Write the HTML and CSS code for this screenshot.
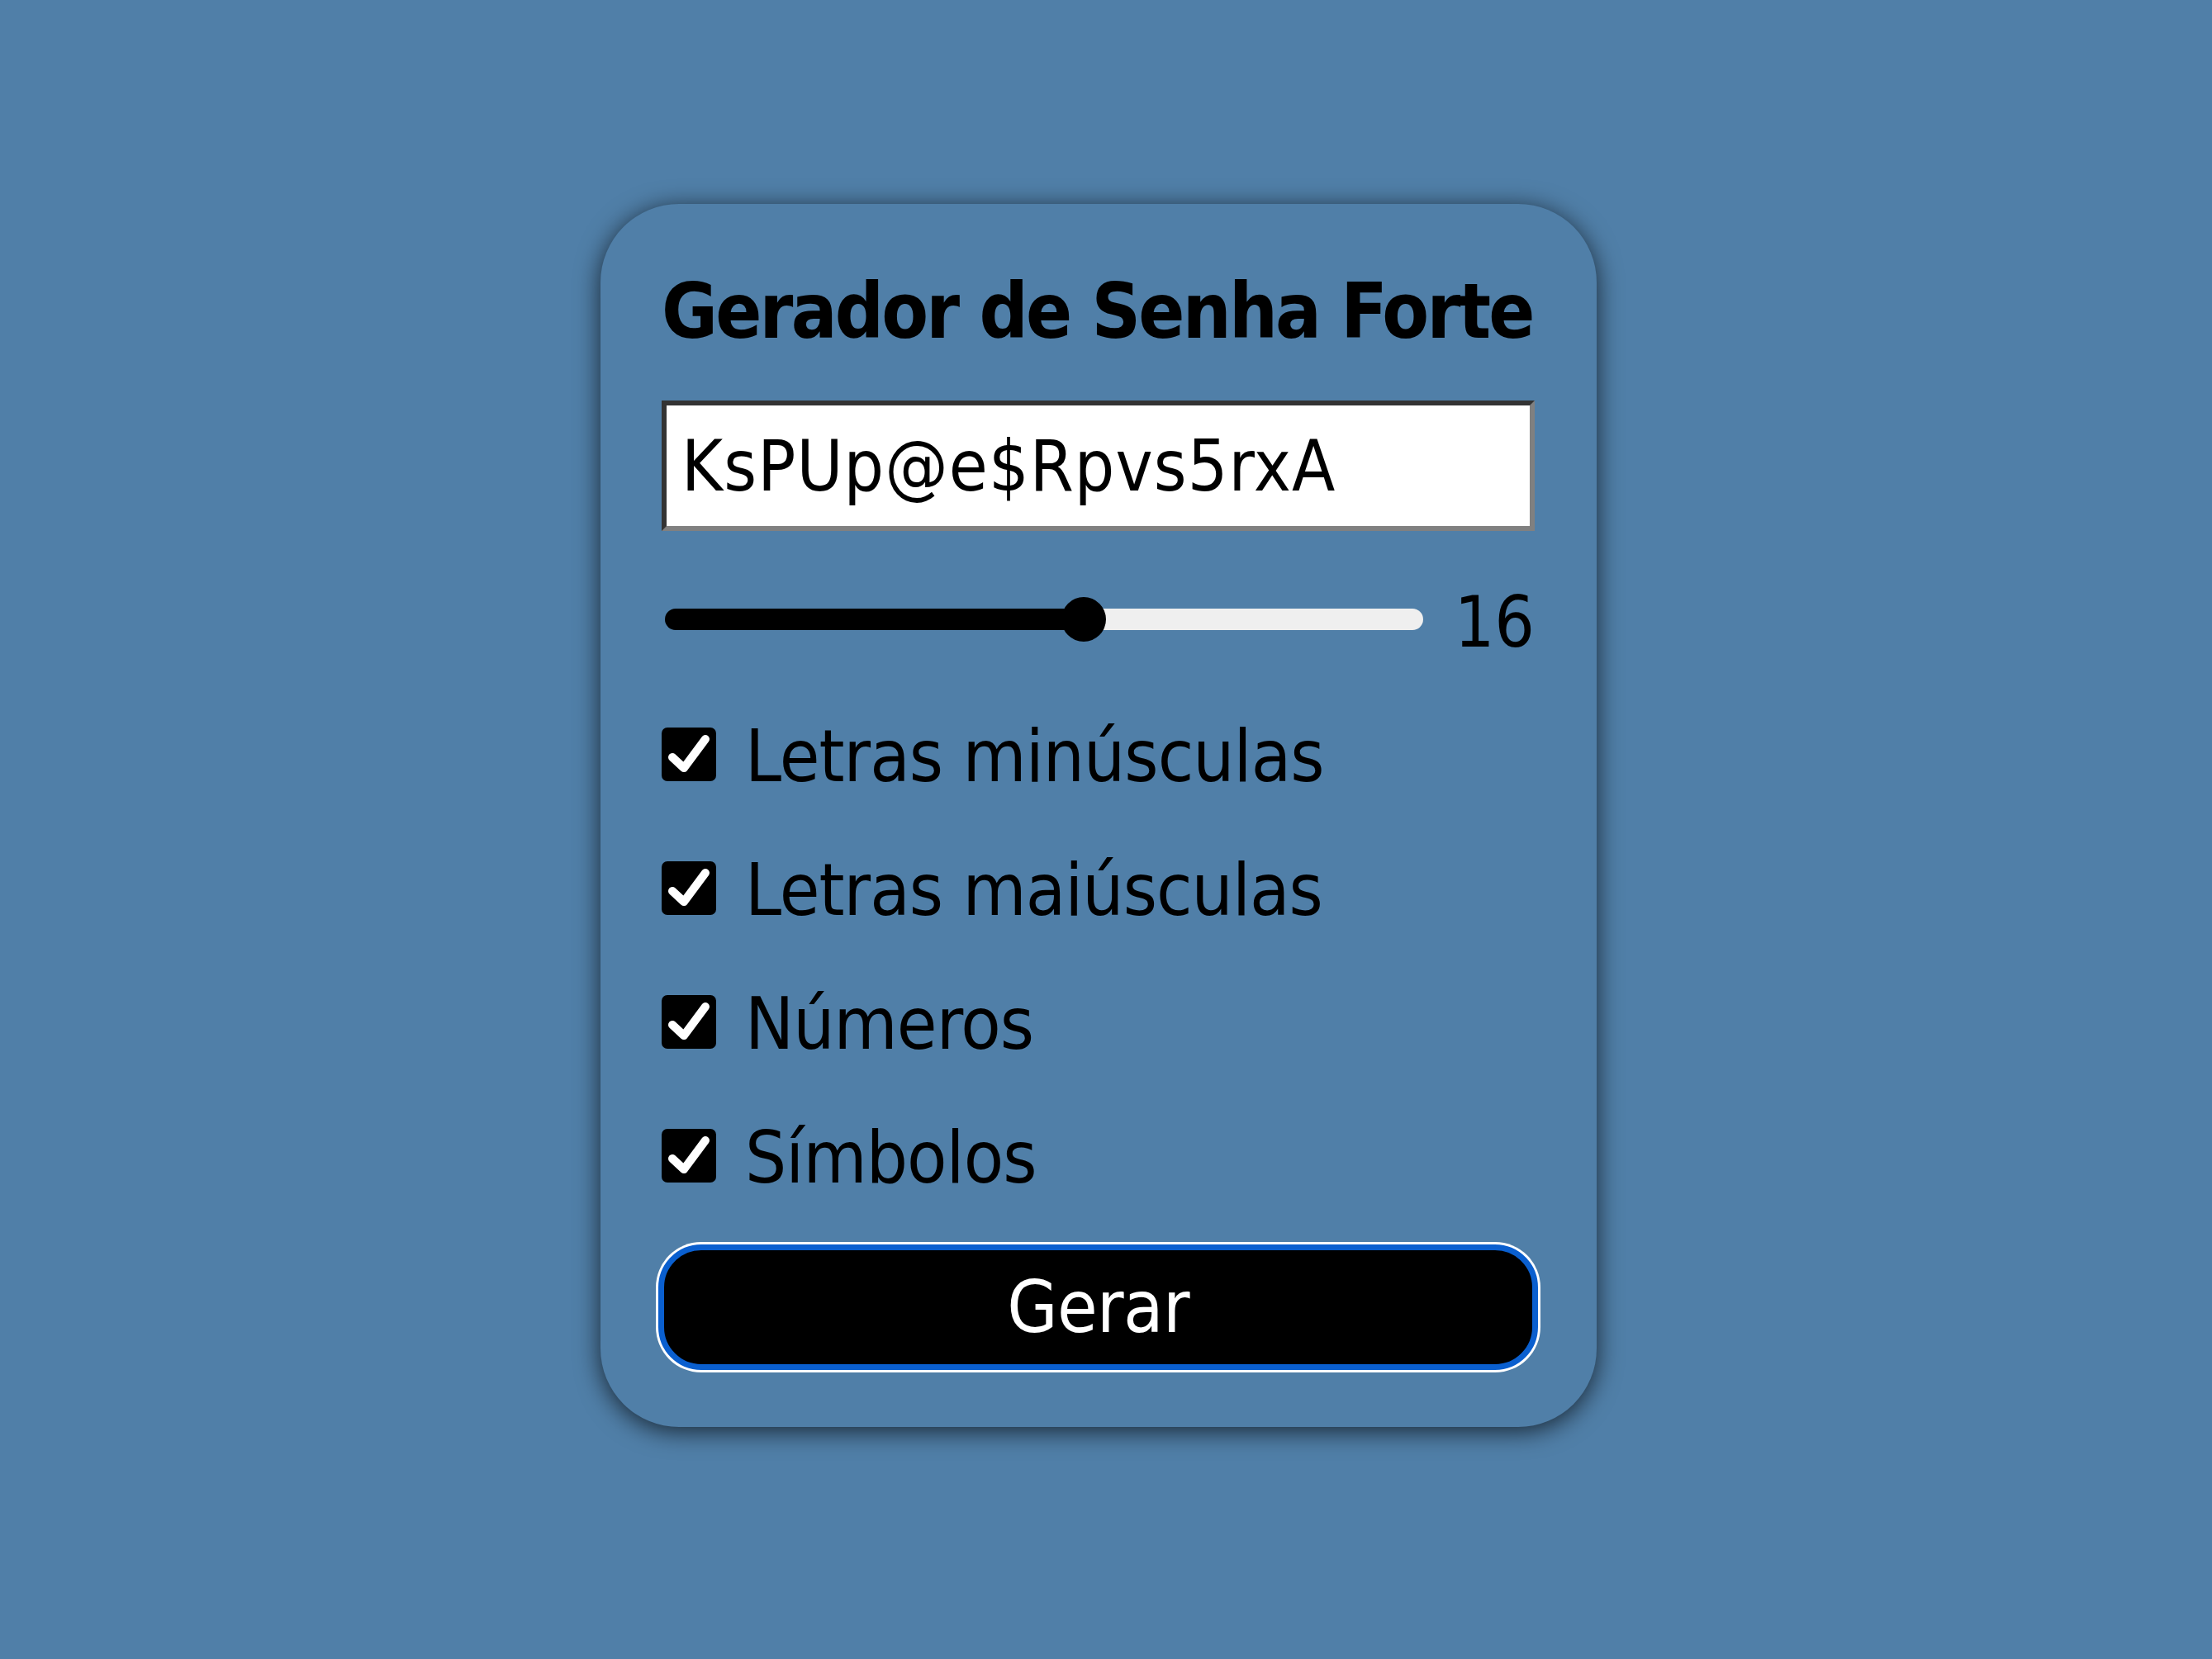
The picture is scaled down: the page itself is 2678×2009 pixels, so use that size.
FILE: index.html
```html
<!DOCTYPE html>
<html lang="pt-BR">
<head>
<meta charset="utf-8">
<title>Gerador de Senha Forte</title>
<link rel="stylesheet" href="styles.css">
</head>
<body>
  <main class="card">
    <h1 class="title">Gerador de Senha Forte</h1>
    <input class="password" type="text" value="KsPUp@e$Rpvs5rxA" readonly>
    <div class="length-row">
      <input class="range" type="range" min="6" max="24" value="16">
      <span class="length-value">16</span>
    </div>
    <div class="options">
      <label class="option">
        <span class="box"><svg viewBox="0 0 66 65" width="66" height="65"><polyline points="13,36 27,49 53,14" fill="none" stroke="#fff" stroke-width="10" stroke-linecap="round" stroke-linejoin="round"/></svg></span>
        <span class="option-text">Letras minúsculas</span>
      </label>
      <label class="option">
        <span class="box"><svg viewBox="0 0 66 65" width="66" height="65"><polyline points="13,36 27,49 53,14" fill="none" stroke="#fff" stroke-width="10" stroke-linecap="round" stroke-linejoin="round"/></svg></span>
        <span class="option-text">Letras maiúsculas</span>
      </label>
      <label class="option">
        <span class="box"><svg viewBox="0 0 66 65" width="66" height="65"><polyline points="13,36 27,49 53,14" fill="none" stroke="#fff" stroke-width="10" stroke-linecap="round" stroke-linejoin="round"/></svg></span>
        <span class="option-text">Números</span>
      </label>
      <label class="option">
        <span class="box"><svg viewBox="0 0 66 65" width="66" height="65"><polyline points="13,36 27,49 53,14" fill="none" stroke="#fff" stroke-width="10" stroke-linecap="round" stroke-linejoin="round"/></svg></span>
        <span class="option-text">Símbolos</span>
      </label>
    </div>
    <button class="generate" type="button">Gerar</button>
  </main>
</body>
</html>
```

FILE: styles.css
```css
* {
  box-sizing: border-box;
}

html, body {
  margin: 0;
  height: 100%;
}

body {
  background: #507fa8;
  display: flex;
  align-items: center;
  justify-content: center;
  padding: 0 18px 34px 0;
  font-family: "DejaVu Sans Condensed", "DejaVu Sans", sans-serif;
  font-stretch: condensed;
  color: #000;
}

.card {
  width: 1206px;
  padding: 76px 75px 69px 74px;
  background: #507fa8;
  border-radius: 95px;
  box-shadow: 0 5px 30px rgba(0, 0, 0, 0.7);
  display: flex;
  flex-direction: column;
}

.title {
  margin: 0;
  font-size: 92px;
  line-height: 110px;
  font-weight: bold;
  letter-spacing: -2.75px;
  white-space: nowrap;
}

.password {
  margin-top: 52px;
  width: 100%;
  height: 158px;
  border-style: solid;
  border-width: 6px;
  border-color: #333 #808080 #808080 #333;
  background: #fff;
  padding: 0 18px;
  font-family: inherit;
  font-stretch: condensed;
  font-size: 85px;
  letter-spacing: 1.1px;
  color: #000;
  outline: none;
}

.length-row {
  margin-top: 57px;
  height: 100px;
  display: flex;
  align-items: center;
  gap: 38px;
}

.range {
  -webkit-appearance: none;
  appearance: none;
  flex: 1;
  margin: 0 0 0 4px;
  height: 54px;
  background: transparent;
}

.range::-webkit-slider-runnable-track {
  height: 26px;
  border-radius: 13px;
  background: linear-gradient(to right, #000 0 55%, #efefef 55% 100%);
}

.range::-webkit-slider-thumb {
  -webkit-appearance: none;
  appearance: none;
  width: 54px;
  height: 54px;
  margin-top: -14px;
  border-radius: 50%;
  background: #000;
}

.length-value {
  font-size: 85px;
  line-height: 100px;
  position: relative;
  top: 4px;
}

.options {
  margin-top: 63px;
  display: flex;
  flex-direction: column;
  gap: 62px;
}

.option {
  display: flex;
  align-items: center;
  gap: 35px;
  height: 100px;
  font-size: 88px;
  line-height: 100px;
  letter-spacing: -0.9px;
}

.box {
  width: 66px;
  height: 65px;
  border-radius: 7px;
  background: #000;
  display: flex;
  flex: none;
}

.option-text {
  position: relative;
  top: 3px;
}

.generate {
  margin: 58px -4px 0;
  height: 152px;
  border: 7px solid #0a5fcf;
  border-radius: 52px;
  box-shadow: 0 0 0 3px #fff;
  background: #000;
  color: #fff;
  font-family: inherit;
  font-stretch: condensed;
  font-size: 88px;
  letter-spacing: -0.6px;
  line-height: 1;
  padding: 0;
}
```
